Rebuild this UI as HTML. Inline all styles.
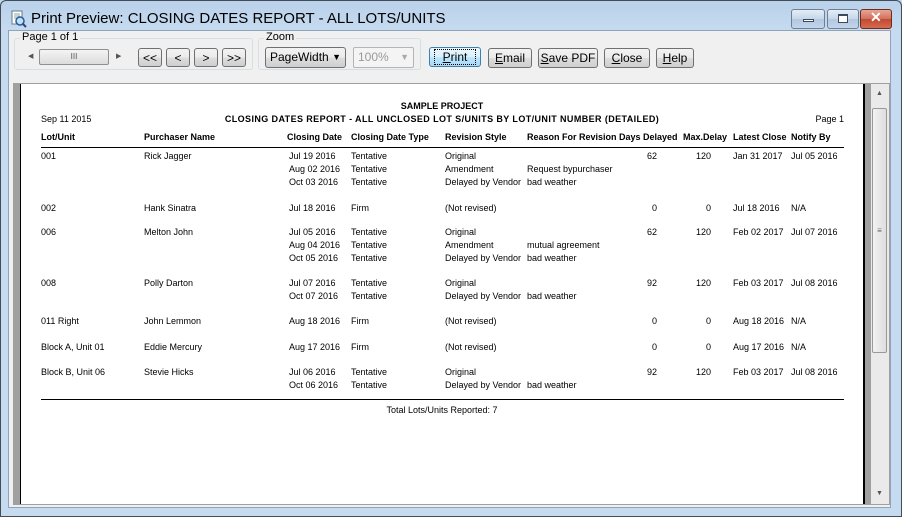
<!DOCTYPE html>
<html><head><meta charset="utf-8"><style>
*{margin:0;padding:0;box-sizing:border-box}
body{width:902px;height:517px;position:relative;overflow:hidden;background:#c2d8ee;font-family:"Liberation Sans",Arial,sans-serif}
.a{position:absolute;white-space:nowrap}
#frame{position:absolute;left:0;top:0;width:902px;height:517px;border:1px solid #444c57;border-radius:6px 6px 0 0;background:linear-gradient(#b9d1ea 0,#c6dbef 30px,#c6dbef 100%)}
#client{position:absolute;left:8px;top:30px;width:883px;height:478px;background:#f0f0f0;border:1px solid #8ea4bd}
.gb{position:absolute;border:1px solid #d5dfe5;border-radius:3px}
.gl{position:absolute;background:#f0f0f0;font-size:11px;padding:0 2px;color:#000}
.btn{position:absolute;height:20px;border:1px solid #707070;border-radius:3px;background:linear-gradient(#f2f2f2,#ebebeb 50%,#dddddd 51%,#cfcfcf);font-size:12px;text-align:center;line-height:18px;color:#000}
.wb{position:absolute;top:9px;height:20px;border:1px solid #6e7f93;border-radius:3px;background:linear-gradient(#e4edf7,#c6d6e9 50%,#b3c7df 51%,#c2d5ea)}
.r{font-size:9px;color:#000;line-height:11px}
.b{font-weight:bold}
.rt{text-align:right}
</style></head><body>
<div id="frame"></div>
<!-- title -->
<svg class="a" style="left:10px;top:10px" width="18" height="18" viewBox="0 0 18 18"><rect x="2" y="1" width="10" height="13" fill="#fff" stroke="#6a7a8c"/><path d="M4 4h6M4 6h6M4 8h5" stroke="#8aa" /><circle cx="10" cy="11" r="4" fill="#bfe0f8" stroke="#2a5c9a" stroke-width="1.5"/><path d="M12.5 13.5l3.5 3.5" stroke="#2a4a7a" stroke-width="2"/></svg>
<div class="a" style="left:31px;top:10px;font-size:15px;color:#000">Print Preview: CLOSING DATES REPORT - ALL LOTS/UNITS</div>
<div class="wb" style="left:791px;width:34px"><div class="a" style="left:11px;top:9px;width:11px;height:3px;background:#fff;border:1px solid #3a4a5e"></div></div>
<div class="wb" style="left:827px;width:32px"><div class="a" style="left:10px;top:4px;width:10px;height:9px;background:#fff;border:1px solid #3a4a5e;border-top-width:2px"></div></div>
<div class="wb" style="left:860px;width:32px;border-color:#6d2a1e;background:linear-gradient(#e8a493,#d0705c 50%,#c04a32 51%,#d86a4e)"><div class="a" style="left:9px;top:-1px;color:#fff;font-weight:bold;font-size:14px">✕</div></div>
<div id="client"></div>
<!-- group boxes -->
<div class="gb" style="left:14px;top:38px;width:239px;height:32px"></div>
<div class="gl" style="left:20px;top:31px">Page 1 of 1</div>
<div class="gb" style="left:258px;top:38px;width:163px;height:32px"></div>
<div class="gl" style="left:264px;top:31px">Zoom</div>
<!-- hscroll -->
<div class="a" style="left:28px;top:52px;font-size:7px;color:#555">◀</div>
<div class="a" style="left:39px;top:49px;width:70px;height:16px;border:1px solid #909090;border-radius:2px;background:linear-gradient(#f4f4f4,#dcdcdc);font-size:8px;text-align:center;line-height:14px;color:#555">III</div>
<div class="a" style="left:116px;top:52px;font-size:7px;color:#555">▶</div>
<div class="btn" style="left:138px;top:48px;width:24px;height:19px">&lt;&lt;</div>
<div class="btn" style="left:166px;top:48px;width:24px;height:19px">&lt;</div>
<div class="btn" style="left:194px;top:48px;width:24px;height:19px">&gt;</div>
<div class="btn" style="left:222px;top:48px;width:24px;height:19px">&gt;&gt;</div>
<div class="btn" style="left:265px;top:47px;width:81px;height:21px;text-align:left;padding-left:4px;line-height:19px">PageWidth <span style="position:absolute;right:4px;font-size:9px">▼</span></div>
<div class="a" style="left:353px;top:47px;width:61px;height:21px;border:1px solid #b5b5b5;border-radius:2px;background:#f4f4f4;font-size:12px;color:#999;line-height:19px;padding-left:4px">100%<span style="position:absolute;right:4px;font-size:9px;color:#aaa">▼</span></div>
<div class="btn" style="left:429px;top:47px;width:52px;border-color:#3c7fb1;background:linear-gradient(#eaf6fd,#d9f0fc 50%,#bee6fd 51%,#a7d9f5)"><span style="border:1px dotted #000;padding:0 8px"><u>P</u>rint</span></div>
<div class="btn" style="left:488px;top:48px;width:44px"><u>E</u>mail</div>
<div class="btn" style="left:538px;top:48px;width:60px"><u>S</u>ave PDF</div>
<div class="btn" style="left:604px;top:48px;width:46px"><u>C</u>lose</div>
<div class="btn" style="left:656px;top:48px;width:38px"><u>H</u>elp</div>
<!-- preview panel -->
<div class="a" style="left:13px;top:83px;width:877px;height:422px;border:1px solid #a0a0a0;background:#fff"></div>
<div class="a" style="left:14px;top:84px;width:6px;height:420px;background:#a0a0a0"></div>
<div class="a" style="left:20px;top:84px;width:1px;height:420px;background:#000"></div>
<div class="a" style="left:863px;top:84px;width:2px;height:420px;background:#000"></div>
<div class="a" style="left:865px;top:84px;width:6px;height:420px;background:#a0a0a0"></div>
<div class="a" style="left:871px;top:84px;width:18px;height:420px;background:#eaeaea"></div>
<div class="a" style="left:876px;top:90px;font-size:7px;color:#555">▲</div>
<div class="a" style="left:876px;top:490px;font-size:7px;color:#555">▼</div>
<div class="a" style="left:872px;top:108px;width:15px;height:245px;border:1px solid #999;border-radius:2px;background:linear-gradient(90deg,#f2f2f2,#dedede);font-size:8px;color:#666;text-align:center;line-height:243px">≡</div>
<!-- report -->
<div class="a r b" style="left:0;width:884px;text-align:center;top:101px">SAMPLE PROJECT</div>
<div class="a r b" style="left:0;width:884px;text-align:center;top:114px;letter-spacing:.4px">CLOSING DATES REPORT - ALL UNCLOSED LOT S/UNITS BY LOT/UNIT NUMBER (DETAILED)</div>
<div class="a r" style="left:41px;top:114px">Sep 11 2015</div>
<div class="a r" style="left:804px;width:40px;top:114px" class="rt"><div style="text-align:right">Page 1</div></div>
<div class="a r b" style="left:41px;top:132px">Lot/Unit</div>
<div class="a r b" style="left:144px;top:132px">Purchaser Name</div>
<div class="a r b" style="left:287px;top:132px">Closing Date</div>
<div class="a r b" style="left:351px;top:132px">Closing Date Type</div>
<div class="a r b" style="left:445px;top:132px">Revision Style</div>
<div class="a r b" style="left:527px;top:132px">Reason For Revision</div>
<div class="a r b" style="left:619px;top:132px">Days Delayed</div>
<div class="a r b" style="left:683px;top:132px">Max.Delay</div>
<div class="a r b" style="left:733px;top:132px">Latest Close</div>
<div class="a r b" style="left:791px;top:132px">Notify By</div>
<div class="a" style="left:41px;top:147px;width:803px;height:1px;background:#000"></div>
<div class="a" style="left:41px;top:399px;width:803px;height:1px;background:#000"></div>
<div class="a r" style="left:0;width:884px;text-align:center;top:405px">Total Lots/Units Reported: 7</div>
<div id="rows"></div>
<script>
var rows=[
[151,"001","Rick Jagger",[["Jul 19 2016","Tentative","Original",""],["Aug 02 2016","Tentative","Amendment","Request bypurchaser"],["Oct 03 2016","Tentative","Delayed by Vendor","bad weather"]],"62","120","Jan 31 2017","Jul 05 2016"],
[203,"002","Hank Sinatra",[["Jul 18 2016","Firm","(Not revised)",""]],"0","0","Jul 18 2016","N/A"],
[227,"006","Melton John",[["Jul 05 2016","Tentative","Original",""],["Aug 04 2016","Tentative","Amendment","mutual agreement"],["Oct 05 2016","Tentative","Delayed by Vendor","bad weather"]],"62","120","Feb 02 2017","Jul 07 2016"],
[278,"008","Polly Darton",[["Jul 07 2016","Tentative","Original",""],["Oct 07 2016","Tentative","Delayed by Vendor","bad weather"]],"92","120","Feb 03 2017","Jul 08 2016"],
[316,"011 Right","John Lemmon",[["Aug 18 2016","Firm","(Not revised)",""]],"0","0","Aug 18 2016","N/A"],
[342,"Block A, Unit 01","Eddie Mercury",[["Aug 17 2016","Firm","(Not revised)",""]],"0","0","Aug 17 2016","N/A"],
[367,"Block B, Unit 06","Stevie Hicks",[["Jul 06 2016","Tentative","Original",""],["Oct 06 2016","Tentative","Delayed by Vendor","bad weather"]],"92","120","Feb 03 2017","Jul 08 2016"]];
var h="";function t(x,y,s,r){h+='<div class="a r" style="'+(r?'left:'+(x-40)+'px;width:40px;text-align:right;':'left:'+x+'px;')+'top:'+y+'px">'+s+'</div>';}
rows.forEach(function(R){var y=R[0];t(41,y,R[1]);t(144,y,R[2]);
R[3].forEach(function(l,i){var yy=y+i*13;t(289,yy,l[0]);t(351,yy,l[1]);t(445,yy,l[2]);t(527,yy,l[3]);});
t(657,y,R[4],1);t(711,y,R[5],1);t(733,y,R[6]);t(791,y,R[7]);});
document.getElementById("rows").innerHTML=h;
</script>
</body></html>
